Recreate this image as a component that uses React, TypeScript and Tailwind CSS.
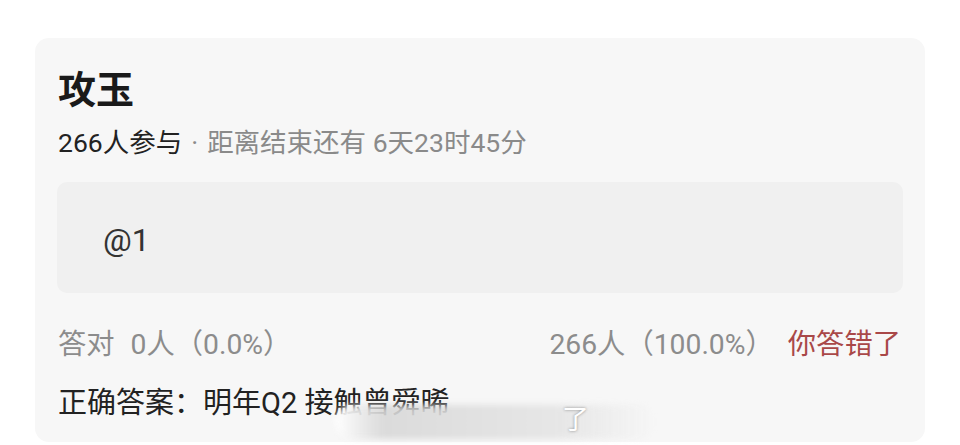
import React from "react";

export default function App() {
  return (
    <div
      className="relative w-[960px] h-[445px] bg-white overflow-hidden"
      style={{ fontFamily: 'Roboto, "Noto Sans CJK SC", sans-serif' }}
    >
      <div className="absolute left-[35px] top-[38px] w-[890px] h-[404px] rounded-[14px] bg-[#f7f7f7] px-[22px] pt-[32px] flex flex-col">
        <div className="text-[38px] leading-[40px] font-bold text-[#1a1a1a] pl-[1px]">攻玉</div>
        <div className="mt-[18px] text-[26.5px] leading-[30px] text-[#8a8a8a] pl-[1px] flex items-center">
          <span className="text-[#222]">266人参与</span>
          <span className="mx-[9px]">·</span>
          <span>距离结束还有 6天23时45分</span>
        </div>
        <div className="mt-[24px] h-[111px] rounded-[10px] bg-[#f0f0f0] pl-[46px] flex items-center">
          <span className="text-[32px] leading-[40px] text-[#333] mt-[4px]">@1</span>
        </div>
        <div className="mt-[34px] flex items-center justify-between text-[28.3px] leading-[36px] text-[#8c8c8c] pl-[1px] pr-[2px]">
          <span>
            答对<span className="ml-[16px]">0人（0.0%）</span>
          </span>
          <span>
            266人（100.0%）<span className="ml-[14px] text-[#a94848]">你答错了</span>
          </span>
        </div>
        <div className="mt-[22px] text-[29px] leading-[36px] text-[#222] pl-[1px]">
          正确答案：明年Q2 接触曾舜晞
        </div>
      </div>
      <div className="absolute left-[335px] top-[405px] w-[320px] h-[34px] rounded-full bg-[linear-gradient(90deg,rgba(255,255,255,0.95),rgba(215,215,215,0.9)_15%,rgba(228,228,228,0.9)_70%,rgba(255,255,255,0))] blur-[3px]" />
      <div className="absolute left-[562px] top-[402px] text-[27px] leading-[36px] text-white [text-shadow:0_0_3px_#888]">
        了
      </div>
    </div>
  );
}
